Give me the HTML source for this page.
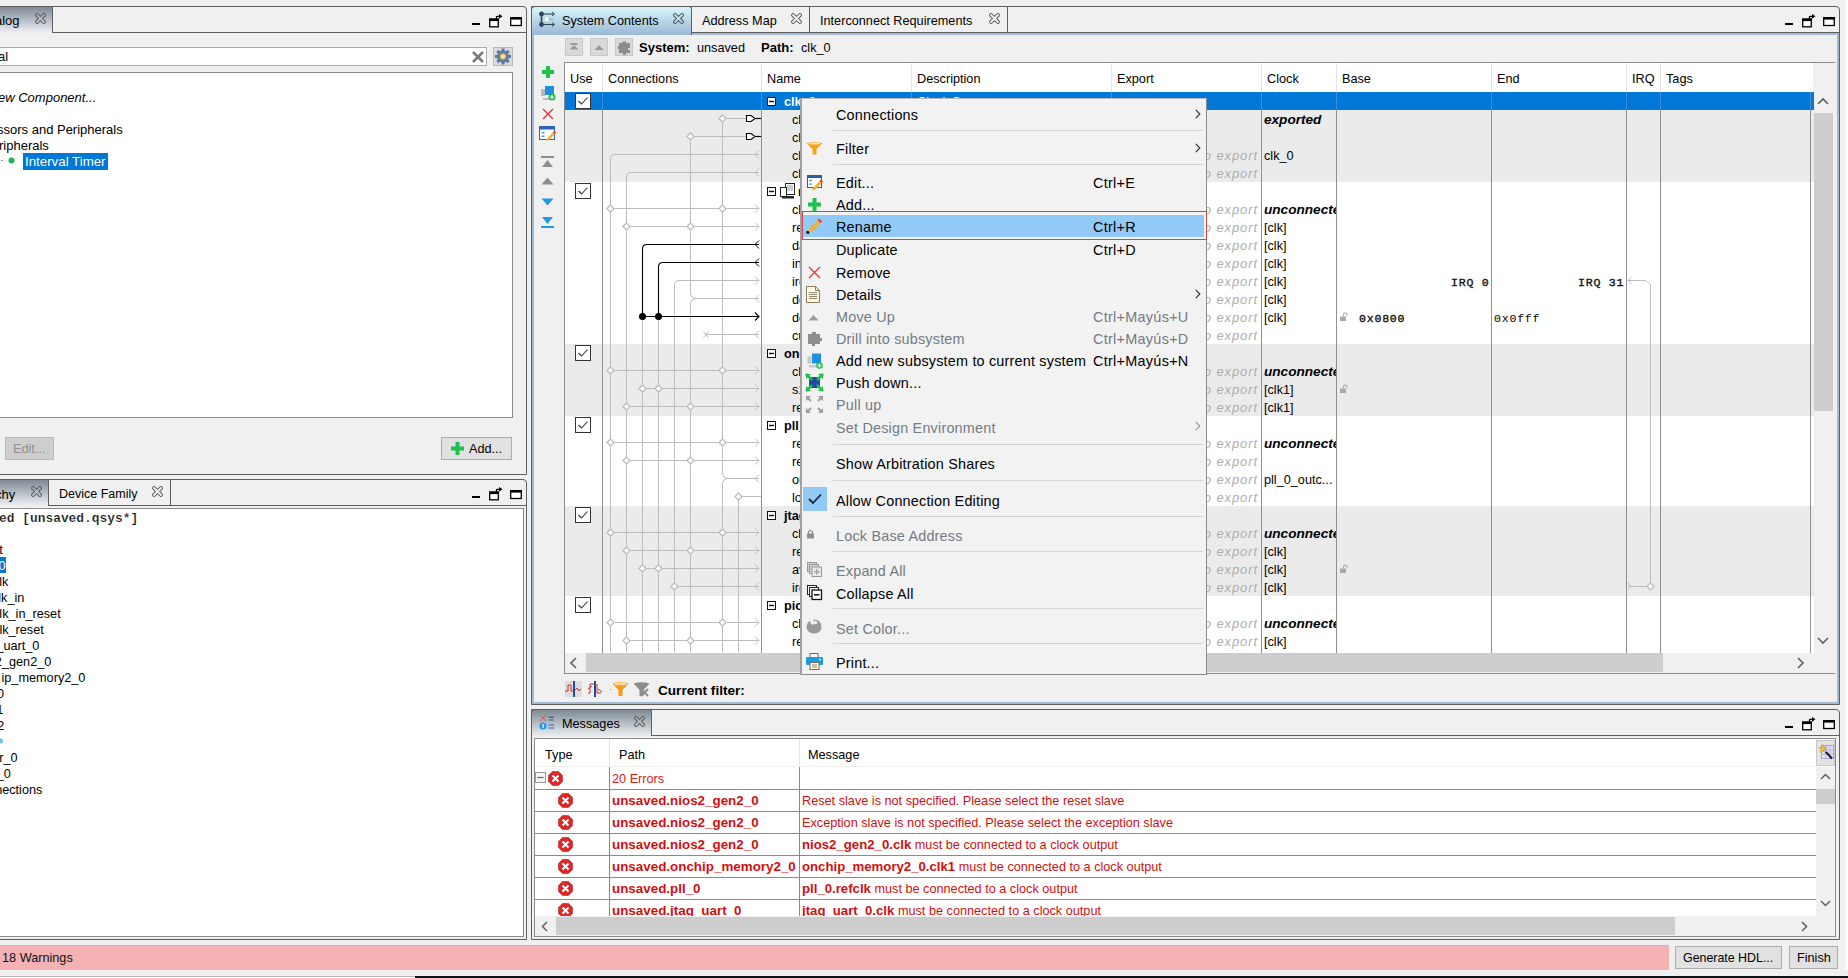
<!DOCTYPE html><html><head><meta charset="utf-8"><style>
html,body{margin:0;padding:0;}
body{width:1848px;height:978px;position:relative;overflow:hidden;background:#f0f0f0;font-family:"Liberation Sans",sans-serif;font-size:12.7px;color:#000;}
.t{position:absolute;white-space:nowrap;line-height:20px;}
div{box-sizing:border-box;}
svg{position:absolute;overflow:visible;}
</style></head><body>
<div style="position:absolute;left:1845px;top:0px;width:3px;height:978px;background:#fbfbfb"></div>
<div style="position:absolute;left:-5px;top:6px;width:532px;height:469px;border:1px solid #5f5f5f;border-top-right-radius:4px;"></div>
<div style="position:absolute;left:0px;top:32px;width:526px;height:1px;background:#5f5f5f"></div>
<div style="position:absolute;left:0px;top:7px;width:53px;height:26px;background:linear-gradient(#7f8a95,#d9dde2 80%,#eef0f2);border-right:1px solid #5f5f5f"></div>
<div class="t" style="left:-5px;top:11px;font-size:13px;">alog</div>
<svg style="left:34px;top:12px" width="13" height="13" viewBox="0 0 13 13"><g transform="translate(6.5 6.5) rotate(45)"><path d="M-1.5 -4.9 A1.5 1.5 0 0 1 1.5 -4.9 V-1.5 H4.9 A1.5 1.5 0 0 1 4.9 1.5 H1.5 V4.9 A1.5 1.5 0 0 1 -1.5 4.9 V1.5 H-4.9 A1.5 1.5 0 0 1 -4.9 -1.5 H-1.5 Z" fill="none" stroke="#555" stroke-width="0.95"/></g></svg>
<div style="position:absolute;left:472px;top:23px;width:8px;height:2px;background:#000"></div>
<svg style="left:488px;top:14px" width="16" height="14" viewBox="0 0 16 14"><rect x="1.7" y="5.2" width="8.6" height="7.6" fill="#fff" stroke="#000" stroke-width="1.3"/><rect x="1" y="4.5" width="10" height="2.6" fill="#000"/><path d="M8.5 5 V3 Q8.5 2.3 9.3 2.3 H12" fill="none" stroke="#000" stroke-width="1.3"/><path d="M11 0 L14.5 2.3 L11 4.8 Z" fill="#000"/></svg>
<svg style="left:510px;top:17px" width="13" height="10" viewBox="0 0 13 10"><rect x="0.7" y="0.7" width="10.6" height="7.8" fill="#fff" stroke="#000" stroke-width="1.3"/><rect x="0" y="0" width="12" height="2.6" fill="#000"/></svg>
<div style="position:absolute;left:-2px;top:47px;width:489px;height:19px;background:#fff;border:1px solid #a9a9a9"></div>
<div class="t" style="left:-2px;top:47px;font-size:13px;">al</div>
<svg style="left:471px;top:50px" width="14" height="14" viewBox="0 0 14 14"><path d="M2 2 L12 12 M12 2 L2 12" stroke="#7a7a7a" stroke-width="2.6" stroke-linecap="butt"/></svg>
<div style="position:absolute;left:493px;top:47px;width:20px;height:19px;background:#dcdcdc;border:1px solid #b9b9b9"></div>
<svg style="left:494px;top:48px" width="18" height="17" viewBox="0 0 18 17"><g transform="translate(9 8.5)"><circle r="6" fill="#5b7ba8"/><g fill="#5b7ba8"><rect x="-1.6" y="-8" width="3.2" height="16"/><rect x="-8" y="-1.6" width="16" height="3.2"/><rect x="-1.6" y="-8" width="3.2" height="16" transform="rotate(45)"/><rect x="-1.6" y="-8" width="3.2" height="16" transform="rotate(-45)"/></g><circle r="3.2" fill="#e7b04a"/><circle r="2" fill="#f5e3b8"/></g></svg>
<div style="position:absolute;left:-2px;top:72px;width:515px;height:346px;background:#fff;border:1px solid #8a8a8a"></div>
<div class="t" style="left:-2px;top:88px;font-style:italic;font-size:13px;">ew Component...</div>
<div class="t" style="left:-3px;top:120px;font-size:13px;">ssors and Peripherals</div>
<div class="t" style="left:-1px;top:136px;font-size:13px;">ripherals</div>
<div style="position:absolute;left:1px;top:160px;width:2px;height:1px;background:#999"></div>
<svg style="left:8px;top:157px" width="7" height="7"><circle cx="3.5" cy="3.5" r="3" fill="#1fb25a"/></svg>
<div style="position:absolute;left:23px;top:153px;width:85px;height:17px;background:#0078d7"></div>
<div class="t" style="left:25px;top:152px;font-size:13.3px;color:#fff;">Interval Timer</div>
<div style="position:absolute;left:5px;top:437px;width:49px;height:23px;background:#cecece;border:1px solid #bababa"></div>
<div class="t" style="left:13px;top:439px;color:#8f8f8f;font-size:12.7px;">Edit...</div>
<div style="position:absolute;left:441px;top:437px;width:71px;height:23px;background:#e1e1e1;border:1px solid #adadad"></div>
<svg style="left:451px;top:442px" width="13" height="13" viewBox="0 0 13 13"><path d="M4.5 0 H8.5 V4.5 H13 V8.5 H8.5 V13 H4.5 V8.5 H0 V4.5 H4.5 Z" fill="#1ec24a"/></svg>
<div class="t" style="left:469px;top:439px;font-size:12.7px;">Add...</div>
<div style="position:absolute;left:-5px;top:479px;width:532px;height:461px;border:1px solid #5f5f5f;border-top-right-radius:4px;"></div>
<div style="position:absolute;left:0px;top:505px;width:526px;height:1px;background:#5f5f5f"></div>
<div style="position:absolute;left:0px;top:480px;width:49px;height:26px;background:linear-gradient(#7f8a95,#d9dde2 80%,#eef0f2);border-right:1px solid #5f5f5f"></div>
<div class="t" style="left:-5px;top:485px;font-size:13px;">chy</div>
<svg style="left:30px;top:485px" width="13" height="13" viewBox="0 0 13 13"><g transform="translate(6.5 6.5) rotate(45)"><path d="M-1.5 -4.9 A1.5 1.5 0 0 1 1.5 -4.9 V-1.5 H4.9 A1.5 1.5 0 0 1 4.9 1.5 H1.5 V4.9 A1.5 1.5 0 0 1 -1.5 4.9 V1.5 H-4.9 A1.5 1.5 0 0 1 -4.9 -1.5 H-1.5 Z" fill="none" stroke="#555" stroke-width="0.95"/></g></svg>
<div style="position:absolute;left:49px;top:480px;width:122px;height:25px;background:#f0f0f0;border-right:1px solid #5f5f5f"></div>
<div class="t" style="left:59px;top:484px;font-size:12.5px;">Device Family</div>
<svg style="left:151px;top:485px" width="13" height="13" viewBox="0 0 13 13"><g transform="translate(6.5 6.5) rotate(45)"><path d="M-1.5 -4.9 A1.5 1.5 0 0 1 1.5 -4.9 V-1.5 H4.9 A1.5 1.5 0 0 1 4.9 1.5 H1.5 V4.9 A1.5 1.5 0 0 1 -1.5 4.9 V1.5 H-4.9 A1.5 1.5 0 0 1 -4.9 -1.5 H-1.5 Z" fill="none" stroke="#555" stroke-width="0.95"/></g></svg>
<div style="position:absolute;left:472px;top:496px;width:8px;height:2px;background:#000"></div>
<svg style="left:488px;top:487px" width="16" height="14" viewBox="0 0 16 14"><rect x="1.7" y="5.2" width="8.6" height="7.6" fill="#fff" stroke="#000" stroke-width="1.3"/><rect x="1" y="4.5" width="10" height="2.6" fill="#000"/><path d="M8.5 5 V3 Q8.5 2.3 9.3 2.3 H12" fill="none" stroke="#000" stroke-width="1.3"/><path d="M11 0 L14.5 2.3 L11 4.8 Z" fill="#000"/></svg>
<svg style="left:510px;top:490px" width="13" height="10" viewBox="0 0 13 10"><rect x="0.7" y="0.7" width="10.6" height="7.8" fill="#fff" stroke="#000" stroke-width="1.3"/><rect x="0" y="0" width="12" height="2.6" fill="#000"/></svg>
<div style="position:absolute;left:-2px;top:508px;width:526px;height:429px;background:#fff;border:1px solid #8a8a8a"></div>
<div class="t" style="left:-1px;top:509px;font-family:'Liberation Mono', monospace;font-weight:bold;font-size:12.9px;-webkit-text-stroke:0.2px #fff;color:#111">ed [unsaved.qsys*]</div>
<div style="position:absolute;left:0px;top:557px;width:6px;height:16px;background:#0078d7"></div>
<div class="t" style="right:1845.3px;top:540px;font-size:12.7px;color:#000;">t</div>
<div class="t" style="right:1842.5px;top:556px;font-size:12.7px;color:#fff;">0</div>
<div class="t" style="right:1839.7px;top:572px;font-size:12.7px;color:#000;">lk</div>
<div class="t" style="right:1823.7px;top:588px;font-size:12.7px;color:#000;">lk_in</div>
<div class="t" style="right:1787.3px;top:604px;font-size:12.7px;color:#000;">lk_in_reset</div>
<div class="t" style="right:1804.2px;top:620px;font-size:12.7px;color:#000;">lk_reset</div>
<div class="t" style="right:1808.6px;top:636px;font-size:12.7px;color:#000;">_uart_0</div>
<div class="t" style="right:1796.7px;top:652px;font-size:12.7px;color:#000;">2_gen2_0</div>
<div class="t" style="right:1762.6px;top:668px;font-size:12.7px;color:#000;">ip_memory2_0</div>
<div class="t" style="right:1844px;top:684px;font-size:12.7px;color:#000;">0</div>
<div class="t" style="right:1844.6px;top:700px;font-size:12.7px;color:#000;">1</div>
<div class="t" style="right:1843.6px;top:716px;font-size:12.7px;color:#000;">2</div>
<div class="t" style="right:1830.5px;top:748px;font-size:12.7px;color:#000;">r_0</div>
<div class="t" style="right:1837.2px;top:764px;font-size:12.7px;color:#000;">_0</div>
<div class="t" style="right:1805.6px;top:780px;font-size:12.7px;color:#000;">nections</div>
<svg style="left:0;top:737px" width="4" height="8"><circle cx="0.5" cy="4" r="2.5" fill="#6ac6e8"/></svg>
<div style="position:absolute;left:531px;top:6px;width:1309px;height:699px;border:1px solid #5f5f5f;border-top-right-radius:4px;"></div>
<div style="position:absolute;left:532px;top:33px;width:1307px;height:671px;border:2px solid #a3bad3;background:#f0f0f0"></div>
<div style="position:absolute;left:532px;top:32px;width:1307px;height:1px;background:#5f5f5f"></div>
<div style="position:absolute;left:531px;top:6px;width:161px;height:29px;background:linear-gradient(#d8f6fa,#b6d3e6 55%,#9ab8d6);border:1px solid #5f5f5f;border-bottom:none;border-top-left-radius:4px;border-top-right-radius:3px"></div>
<svg style="left:537px;top:10px" width="20" height="18" viewBox="0 0 20 18"><g fill="#2b4660" stroke="#2b4660"><circle cx="4.5" cy="4" r="2.4" stroke="none"/><circle cx="4.5" cy="14.5" r="2.4" stroke="none"/><line x1="4.5" y1="4" x2="4.5" y2="14.5" stroke-width="1.6"/><line x1="4.5" y1="4" x2="17" y2="4" stroke-width="1.1"/><line x1="4.5" y1="14.5" x2="17" y2="14.5" stroke-width="1.1"/><path d="M15 2 L17.5 4 L15 6" fill="none" stroke-width="1"/><path d="M15 12.5 L17.5 14.5 L15 16.5" fill="none" stroke-width="1"/></g><rect x="8" y="7.5" width="3.5" height="3.5" fill="#fff"/><line x1="11.5" y1="9.2" x2="17" y2="9.2" stroke="#9aa8b6" stroke-width="1"/></svg>
<div class="t" style="left:562px;top:11px;font-size:12.7px;">System Contents</div>
<svg style="left:672px;top:12px" width="13" height="13" viewBox="0 0 13 13"><g transform="translate(6.5 6.5) rotate(45)"><path d="M-1.5 -4.9 A1.5 1.5 0 0 1 1.5 -4.9 V-1.5 H4.9 A1.5 1.5 0 0 1 4.9 1.5 H1.5 V4.9 A1.5 1.5 0 0 1 -1.5 4.9 V1.5 H-4.9 A1.5 1.5 0 0 1 -4.9 -1.5 H-1.5 Z" fill="none" stroke="#3e4a56" stroke-width="0.95"/></g></svg>
<div style="position:absolute;left:692px;top:7px;width:118px;height:26px;border-right:1px solid #5f5f5f"></div>
<div class="t" style="left:702px;top:11px;font-size:12.7px;">Address Map</div>
<svg style="left:790px;top:12px" width="13" height="13" viewBox="0 0 13 13"><g transform="translate(6.5 6.5) rotate(45)"><path d="M-1.5 -4.9 A1.5 1.5 0 0 1 1.5 -4.9 V-1.5 H4.9 A1.5 1.5 0 0 1 4.9 1.5 H1.5 V4.9 A1.5 1.5 0 0 1 -1.5 4.9 V1.5 H-4.9 A1.5 1.5 0 0 1 -4.9 -1.5 H-1.5 Z" fill="none" stroke="#555" stroke-width="0.95"/></g></svg>
<div style="position:absolute;left:810px;top:7px;width:198px;height:26px;border-right:1px solid #5f5f5f"></div>
<div class="t" style="left:820px;top:11px;font-size:12.7px;">Interconnect Requirements</div>
<svg style="left:988px;top:12px" width="13" height="13" viewBox="0 0 13 13"><g transform="translate(6.5 6.5) rotate(45)"><path d="M-1.5 -4.9 A1.5 1.5 0 0 1 1.5 -4.9 V-1.5 H4.9 A1.5 1.5 0 0 1 4.9 1.5 H1.5 V4.9 A1.5 1.5 0 0 1 -1.5 4.9 V1.5 H-4.9 A1.5 1.5 0 0 1 -4.9 -1.5 H-1.5 Z" fill="none" stroke="#555" stroke-width="0.95"/></g></svg>
<div style="position:absolute;left:1785px;top:23px;width:8px;height:2px;background:#000"></div>
<svg style="left:1801px;top:14px" width="16" height="14" viewBox="0 0 16 14"><rect x="1.7" y="5.2" width="8.6" height="7.6" fill="#fff" stroke="#000" stroke-width="1.3"/><rect x="1" y="4.5" width="10" height="2.6" fill="#000"/><path d="M8.5 5 V3 Q8.5 2.3 9.3 2.3 H12" fill="none" stroke="#000" stroke-width="1.3"/><path d="M11 0 L14.5 2.3 L11 4.8 Z" fill="#000"/></svg>
<svg style="left:1823px;top:17px" width="13" height="10" viewBox="0 0 13 10"><rect x="0.7" y="0.7" width="10.6" height="7.8" fill="#fff" stroke="#000" stroke-width="1.3"/><rect x="0" y="0" width="12" height="2.6" fill="#000"/></svg>
<div style="position:absolute;left:565px;top:38px;width:18px;height:18px;background:#d9d9d9;border:1px solid #c8c8c8"></div>
<div style="position:absolute;left:590px;top:38px;width:18px;height:18px;background:#d9d9d9;border:1px solid #c8c8c8"></div>
<div style="position:absolute;left:615px;top:38px;width:18px;height:18px;background:#d9d9d9;border:1px solid #c8c8c8"></div>
<svg style="left:569px;top:43px" width="10" height="9" viewBox="0 0 10 9"><rect x="1.5" y="0" width="7" height="2" fill="#9a9a9a"/><path d="M0.5 6.5 L5 2 L9.5 6.5 Z" fill="#9a9a9a"/></svg>
<svg style="left:594px;top:43px" width="10" height="8" viewBox="0 0 10 8"><path d="M0.5 7 L5 2 L9.5 7 Z" fill="#999"/></svg>
<svg style="left:617px;top:40px" width="15" height="15" viewBox="0 0 15 15"><path d="M2 3 H5 L6 1.5 H9 V3 H13 V8 H11 V10 H13 V13 H9 V15 H6 V13 H2 V9 H1 V6 H2 Z" fill="#8c8c8c"/></svg>
<div class="t" style="left:639px;top:38px;font-weight:bold;font-size:13px;">System:</div>
<div class="t" style="left:697px;top:38px;font-size:12.7px;">unsaved</div>
<div class="t" style="left:761px;top:38px;font-weight:bold;font-size:13px;">Path:</div>
<div class="t" style="left:801px;top:38px;font-size:12.7px;">clk_0</div>
<svg style="left:542px;top:66px" width="12" height="12" viewBox="0 0 12 12"><path d="M4 0 H8 V4 H12 V8 H8 V12 H4 V8 H0 V4 H4 Z" fill="#1ec24a"/></svg>
<svg style="left:540px;top:85px" width="16" height="16" viewBox="0 0 16 16"><rect x="1" y="4" width="4" height="7" fill="#bbb"/><rect x="3" y="13" width="8" height="2" fill="#bbb"/><rect x="5" y="1" width="9" height="9" fill="#1e90e0"/><circle cx="12" cy="12" r="3.5" fill="#1ec24a"/><path d="M12 10 V14 M10 12 H14" stroke="#fff" stroke-width="1.2"/></svg>
<svg style="left:542px;top:108px" width="12" height="12" viewBox="0 0 12 12"><path d="M1 1 L11 11 M11 1 L1 11" stroke="#e03030" stroke-width="1.3"/></svg>
<svg style="left:539px;top:126px" width="17" height="16" viewBox="0 0 17 16"><rect x="0.5" y="0.5" width="15" height="13" fill="#fff" stroke="#2a63b8"/><rect x="0.5" y="0.5" width="15" height="3" fill="#2a63b8"/><rect x="2.5" y="6" width="3" height="1.5" fill="#5aa0e0"/><rect x="2.5" y="9.5" width="3" height="1.5" fill="#5aa0e0"/><path d="M7 14 L14 6 L16 8 L9 15 Z" fill="#f0b030"/><path d="M14 6 L15.5 4.5 L17 6.5 L16 8Z" fill="#e03030"/></svg>
<svg style="left:541px;top:156px" width="13" height="11" viewBox="0 0 13 11"><rect x="0" y="0" width="13" height="2" fill="#8d8d8d"/><path d="M1 11 L6.5 4 L12 11 Z" fill="#8d8d8d"/></svg>
<svg style="left:541px;top:177px" width="13" height="8" viewBox="0 0 13 8"><path d="M0.5 7.5 L6.5 0.5 L12.5 7.5 Z" fill="#8d8d8d"/></svg>
<svg style="left:541px;top:198px" width="13" height="8" viewBox="0 0 13 8"><path d="M0.5 0.5 L6.5 7.5 L12.5 0.5 Z" fill="#1e9be8"/></svg>
<svg style="left:541px;top:217px" width="13" height="11" viewBox="0 0 13 11"><rect x="0" y="9" width="13" height="2" fill="#1e9be8"/><path d="M1 0 L6.5 7 L12 0 Z" fill="#1e9be8"/></svg>
<div style="position:absolute;left:564px;top:62px;width:1271px;height:612px;border:1px solid #8c8c8c;background:#fff"></div>
<div style="position:absolute;left:602px;top:63px;width:1px;height:29px;background:#e3e3e3"></div>
<div style="position:absolute;left:761px;top:63px;width:1px;height:29px;background:#e3e3e3"></div>
<div style="position:absolute;left:911px;top:63px;width:1px;height:29px;background:#e3e3e3"></div>
<div style="position:absolute;left:1111px;top:63px;width:1px;height:29px;background:#e3e3e3"></div>
<div style="position:absolute;left:1261px;top:63px;width:1px;height:29px;background:#e3e3e3"></div>
<div style="position:absolute;left:1336px;top:63px;width:1px;height:29px;background:#e3e3e3"></div>
<div style="position:absolute;left:1491px;top:63px;width:1px;height:29px;background:#e3e3e3"></div>
<div style="position:absolute;left:1626px;top:63px;width:1px;height:29px;background:#e3e3e3"></div>
<div style="position:absolute;left:1660px;top:63px;width:1px;height:29px;background:#e3e3e3"></div>
<div class="t" style="left:570px;top:69px;font-size:12.7px;">Use</div>
<div class="t" style="left:608px;top:69px;font-size:12.7px;">Connections</div>
<div class="t" style="left:767px;top:69px;font-size:12.7px;">Name</div>
<div class="t" style="left:917px;top:69px;font-size:12.7px;">Description</div>
<div class="t" style="left:1117px;top:69px;font-size:12.7px;">Export</div>
<div class="t" style="left:1267px;top:69px;font-size:12.7px;">Clock</div>
<div class="t" style="left:1342px;top:69px;font-size:12.7px;">Base</div>
<div class="t" style="left:1497px;top:69px;font-size:12.7px;">End</div>
<div class="t" style="left:1632px;top:69px;font-size:12.7px;">IRQ</div>
<div class="t" style="left:1666px;top:69px;font-size:12.7px;">Tags</div>
<div style="position:absolute;left:1813px;top:63px;width:22px;height:29px;background:#f0f0f0"></div>
<div style="position:absolute;left:565px;top:92px;width:1249px;height:90px;background:#ebebeb"></div>
<div style="position:absolute;left:565px;top:344px;width:1249px;height:72px;background:#ebebeb"></div>
<div style="position:absolute;left:565px;top:506px;width:1249px;height:90px;background:#ebebeb"></div>
<div style="position:absolute;left:565px;top:92px;width:1249px;height:18px;background:#0078d7"></div>
<div style="position:absolute;left:602px;top:92px;width:1px;height:561px;background:#8f8f8f"></div>
<div style="position:absolute;left:602px;top:92px;width:1px;height:18px;background:#3f8fd8"></div>
<div style="position:absolute;left:761px;top:92px;width:1px;height:561px;background:#8f8f8f"></div>
<div style="position:absolute;left:761px;top:92px;width:1px;height:18px;background:#3f8fd8"></div>
<div style="position:absolute;left:911px;top:92px;width:1px;height:561px;background:#8f8f8f"></div>
<div style="position:absolute;left:911px;top:92px;width:1px;height:18px;background:#3f8fd8"></div>
<div style="position:absolute;left:1111px;top:92px;width:1px;height:561px;background:#8f8f8f"></div>
<div style="position:absolute;left:1111px;top:92px;width:1px;height:18px;background:#3f8fd8"></div>
<div style="position:absolute;left:1261px;top:92px;width:1px;height:561px;background:#8f8f8f"></div>
<div style="position:absolute;left:1261px;top:92px;width:1px;height:18px;background:#3f8fd8"></div>
<div style="position:absolute;left:1336px;top:92px;width:1px;height:561px;background:#8f8f8f"></div>
<div style="position:absolute;left:1336px;top:92px;width:1px;height:18px;background:#3f8fd8"></div>
<div style="position:absolute;left:1491px;top:92px;width:1px;height:561px;background:#8f8f8f"></div>
<div style="position:absolute;left:1491px;top:92px;width:1px;height:18px;background:#3f8fd8"></div>
<div style="position:absolute;left:1626px;top:92px;width:1px;height:561px;background:#8f8f8f"></div>
<div style="position:absolute;left:1626px;top:92px;width:1px;height:18px;background:#3f8fd8"></div>
<div style="position:absolute;left:1660px;top:92px;width:1px;height:561px;background:#8f8f8f"></div>
<div style="position:absolute;left:1660px;top:92px;width:1px;height:18px;background:#3f8fd8"></div>
<div style="position:absolute;left:1810px;top:92px;width:1px;height:561px;background:#8f8f8f"></div>
<div style="position:absolute;left:1810px;top:92px;width:1px;height:18px;background:#3f8fd8"></div>
<svg style="left:575px;top:93px" width="16" height="16" viewBox="0 0 16 16"><rect x="0.5" y="0.5" width="15" height="15" fill="#fff" stroke="#333"/><path d="M3.5 8 L6.5 11 L12.5 4.5" fill="none" stroke="#333" stroke-width="1.1"/></svg>
<svg style="left:575px;top:183px" width="16" height="16" viewBox="0 0 16 16"><rect x="0.5" y="0.5" width="15" height="15" fill="#fff" stroke="#333"/><path d="M3.5 8 L6.5 11 L12.5 4.5" fill="none" stroke="#333" stroke-width="1.1"/></svg>
<svg style="left:575px;top:345px" width="16" height="16" viewBox="0 0 16 16"><rect x="0.5" y="0.5" width="15" height="15" fill="#fff" stroke="#333"/><path d="M3.5 8 L6.5 11 L12.5 4.5" fill="none" stroke="#333" stroke-width="1.1"/></svg>
<svg style="left:575px;top:417px" width="16" height="16" viewBox="0 0 16 16"><rect x="0.5" y="0.5" width="15" height="15" fill="#fff" stroke="#333"/><path d="M3.5 8 L6.5 11 L12.5 4.5" fill="none" stroke="#333" stroke-width="1.1"/></svg>
<svg style="left:575px;top:507px" width="16" height="16" viewBox="0 0 16 16"><rect x="0.5" y="0.5" width="15" height="15" fill="#fff" stroke="#333"/><path d="M3.5 8 L6.5 11 L12.5 4.5" fill="none" stroke="#333" stroke-width="1.1"/></svg>
<svg style="left:575px;top:597px" width="16" height="16" viewBox="0 0 16 16"><rect x="0.5" y="0.5" width="15" height="15" fill="#fff" stroke="#333"/><path d="M3.5 8 L6.5 11 L12.5 4.5" fill="none" stroke="#333" stroke-width="1.1"/></svg>
<svg style="left:767px;top:97px" width="9" height="9" viewBox="0 0 9 9"><rect x="0.5" y="0.5" width="8" height="8" fill="#fff" stroke="#111"/><rect x="2" y="3.8" width="5" height="1.4" fill="#111"/></svg>
<div class="t" style="left:784px;top:92px;font-weight:bold;color:#fff;font-size:12.7px;">clk_0</div>
<div class="t" style="left:917px;top:92px;color:#fff;font-size:12.7px;">Clock Source</div>
<div class="t" style="left:792px;top:110px;font-size:12.7px;">clk_in</div>
<div class="t" style="left:792px;top:128px;font-size:12.7px;">clk_in_reset</div>
<div class="t" style="left:792px;top:146px;font-size:12.7px;">clk</div>
<div class="t" style="left:792px;top:164px;font-size:12.7px;">clk_reset</div>
<svg style="left:767px;top:187px" width="9" height="9" viewBox="0 0 9 9"><rect x="0.5" y="0.5" width="8" height="8" fill="#fff" stroke="#111"/><rect x="2" y="3.8" width="5" height="1.4" fill="#111"/></svg>
<svg style="left:780px;top:183px" width="16" height="16" viewBox="0 0 16 16"><rect x="5.5" y="0.5" width="9" height="11" fill="#fff" stroke="#222"/><rect x="7" y="2" width="6" height="6" fill="#ccc"/><rect x="0.5" y="4.5" width="6" height="9" fill="#fff" stroke="#222"/><rect x="2" y="13" width="12" height="2.5" fill="#222"/></svg>
<div class="t" style="left:798px;top:182px;font-weight:bold;color:#000;font-size:12.7px;">nios2_gen2_0</div>
<div class="t" style="left:917px;top:182px;color:#000;font-size:12.7px;">Nios II Processor</div>
<div class="t" style="left:792px;top:200px;font-size:12.7px;">clk</div>
<div class="t" style="left:792px;top:218px;font-size:12.7px;">reset</div>
<div class="t" style="left:792px;top:236px;font-size:12.7px;">data_master</div>
<div class="t" style="left:792px;top:254px;font-size:12.7px;">instruction_master</div>
<div class="t" style="left:792px;top:272px;font-size:12.7px;">irq</div>
<div class="t" style="left:792px;top:290px;font-size:12.7px;">debug_reset_request</div>
<div class="t" style="left:792px;top:308px;font-size:12.7px;">debug_mem_slave</div>
<div class="t" style="left:792px;top:326px;font-size:12.7px;">custom_instruction_master</div>
<svg style="left:767px;top:349px" width="9" height="9" viewBox="0 0 9 9"><rect x="0.5" y="0.5" width="8" height="8" fill="#fff" stroke="#111"/><rect x="2" y="3.8" width="5" height="1.4" fill="#111"/></svg>
<div class="t" style="left:784px;top:344px;font-weight:bold;color:#000;font-size:12.7px;">onchip_memory2_0</div>
<div class="t" style="left:917px;top:344px;color:#000;font-size:12.7px;">On-Chip Memory (RAM or ROM) Intel FPGA IP</div>
<div class="t" style="left:792px;top:362px;font-size:12.7px;">clk1</div>
<div class="t" style="left:792px;top:380px;font-size:12.7px;">s1</div>
<div class="t" style="left:792px;top:398px;font-size:12.7px;">reset1</div>
<svg style="left:767px;top:421px" width="9" height="9" viewBox="0 0 9 9"><rect x="0.5" y="0.5" width="8" height="8" fill="#fff" stroke="#111"/><rect x="2" y="3.8" width="5" height="1.4" fill="#111"/></svg>
<div class="t" style="left:784px;top:416px;font-weight:bold;color:#000;font-size:12.7px;">pll_0</div>
<div class="t" style="left:917px;top:416px;color:#000;font-size:12.7px;">PLL Intel FPGA IP</div>
<div class="t" style="left:792px;top:434px;font-size:12.7px;">refclk</div>
<div class="t" style="left:792px;top:452px;font-size:12.7px;">reset</div>
<div class="t" style="left:792px;top:470px;font-size:12.7px;">outclk0</div>
<div class="t" style="left:792px;top:488px;font-size:12.7px;">locked</div>
<svg style="left:767px;top:511px" width="9" height="9" viewBox="0 0 9 9"><rect x="0.5" y="0.5" width="8" height="8" fill="#fff" stroke="#111"/><rect x="2" y="3.8" width="5" height="1.4" fill="#111"/></svg>
<div class="t" style="left:784px;top:506px;font-weight:bold;color:#000;font-size:12.7px;">jtag_uart_0</div>
<div class="t" style="left:917px;top:506px;color:#000;font-size:12.7px;">JTAG UART Intel FPGA IP</div>
<div class="t" style="left:792px;top:524px;font-size:12.7px;">clk</div>
<div class="t" style="left:792px;top:542px;font-size:12.7px;">reset</div>
<div class="t" style="left:792px;top:560px;font-size:12.7px;">avalon_jtag_slave</div>
<div class="t" style="left:792px;top:578px;font-size:12.7px;">irq</div>
<svg style="left:767px;top:601px" width="9" height="9" viewBox="0 0 9 9"><rect x="0.5" y="0.5" width="8" height="8" fill="#fff" stroke="#111"/><rect x="2" y="3.8" width="5" height="1.4" fill="#111"/></svg>
<div class="t" style="left:784px;top:596px;font-weight:bold;color:#000;font-size:12.7px;">pio_0</div>
<div class="t" style="left:917px;top:596px;color:#000;font-size:12.7px;">PIO (Parallel I/O) Intel FPGA IP</div>
<div class="t" style="left:792px;top:614px;font-size:12.7px;">clk</div>
<div class="t" style="left:792px;top:632px;font-size:12.7px;">reset</div>
<div class="t" style="left:792px;top:650px;font-size:12.7px;">external_connection</div>
<div class="t" style="left:1058px;top:146px;width:200px;text-align:right;font-style:italic;color:#adadad;font-size:13px;letter-spacing:0.9px;">Double-click to export</div>
<div class="t" style="left:1058px;top:164px;width:200px;text-align:right;font-style:italic;color:#adadad;font-size:13px;letter-spacing:0.9px;">Double-click to export</div>
<div class="t" style="left:1058px;top:200px;width:200px;text-align:right;font-style:italic;color:#adadad;font-size:13px;letter-spacing:0.9px;">Double-click to export</div>
<div class="t" style="left:1058px;top:218px;width:200px;text-align:right;font-style:italic;color:#adadad;font-size:13px;letter-spacing:0.9px;">Double-click to export</div>
<div class="t" style="left:1058px;top:236px;width:200px;text-align:right;font-style:italic;color:#adadad;font-size:13px;letter-spacing:0.9px;">Double-click to export</div>
<div class="t" style="left:1058px;top:254px;width:200px;text-align:right;font-style:italic;color:#adadad;font-size:13px;letter-spacing:0.9px;">Double-click to export</div>
<div class="t" style="left:1058px;top:272px;width:200px;text-align:right;font-style:italic;color:#adadad;font-size:13px;letter-spacing:0.9px;">Double-click to export</div>
<div class="t" style="left:1058px;top:290px;width:200px;text-align:right;font-style:italic;color:#adadad;font-size:13px;letter-spacing:0.9px;">Double-click to export</div>
<div class="t" style="left:1058px;top:308px;width:200px;text-align:right;font-style:italic;color:#adadad;font-size:13px;letter-spacing:0.9px;">Double-click to export</div>
<div class="t" style="left:1058px;top:326px;width:200px;text-align:right;font-style:italic;color:#adadad;font-size:13px;letter-spacing:0.9px;">Double-click to export</div>
<div class="t" style="left:1058px;top:362px;width:200px;text-align:right;font-style:italic;color:#adadad;font-size:13px;letter-spacing:0.9px;">Double-click to export</div>
<div class="t" style="left:1058px;top:380px;width:200px;text-align:right;font-style:italic;color:#adadad;font-size:13px;letter-spacing:0.9px;">Double-click to export</div>
<div class="t" style="left:1058px;top:398px;width:200px;text-align:right;font-style:italic;color:#adadad;font-size:13px;letter-spacing:0.9px;">Double-click to export</div>
<div class="t" style="left:1058px;top:434px;width:200px;text-align:right;font-style:italic;color:#adadad;font-size:13px;letter-spacing:0.9px;">Double-click to export</div>
<div class="t" style="left:1058px;top:452px;width:200px;text-align:right;font-style:italic;color:#adadad;font-size:13px;letter-spacing:0.9px;">Double-click to export</div>
<div class="t" style="left:1058px;top:470px;width:200px;text-align:right;font-style:italic;color:#adadad;font-size:13px;letter-spacing:0.9px;">Double-click to export</div>
<div class="t" style="left:1058px;top:488px;width:200px;text-align:right;font-style:italic;color:#adadad;font-size:13px;letter-spacing:0.9px;">Double-click to export</div>
<div class="t" style="left:1058px;top:524px;width:200px;text-align:right;font-style:italic;color:#adadad;font-size:13px;letter-spacing:0.9px;">Double-click to export</div>
<div class="t" style="left:1058px;top:542px;width:200px;text-align:right;font-style:italic;color:#adadad;font-size:13px;letter-spacing:0.9px;">Double-click to export</div>
<div class="t" style="left:1058px;top:560px;width:200px;text-align:right;font-style:italic;color:#adadad;font-size:13px;letter-spacing:0.9px;">Double-click to export</div>
<div class="t" style="left:1058px;top:578px;width:200px;text-align:right;font-style:italic;color:#adadad;font-size:13px;letter-spacing:0.9px;">Double-click to export</div>
<div class="t" style="left:1058px;top:614px;width:200px;text-align:right;font-style:italic;color:#adadad;font-size:13px;letter-spacing:0.9px;">Double-click to export</div>
<div class="t" style="left:1058px;top:632px;width:200px;text-align:right;font-style:italic;color:#adadad;font-size:13px;letter-spacing:0.9px;">Double-click to export</div>
<div style="position:absolute;left:1262px;top:92px;width:74px;height:561px;overflow:hidden">
<div class="t" style="left:2px;top:18px;font-weight:bold;font-style:italic;font-size:13.6px;">exported</div>
<div class="t" style="left:2px;top:54px;font-size:12.7px;">clk_0</div>
<div class="t" style="left:2px;top:108px;font-weight:bold;font-style:italic;font-size:13.6px;">unconnected</div>
<div class="t" style="left:2px;top:126px;font-size:12.7px;">[clk]</div>
<div class="t" style="left:2px;top:144px;font-size:12.7px;">[clk]</div>
<div class="t" style="left:2px;top:162px;font-size:12.7px;">[clk]</div>
<div class="t" style="left:2px;top:180px;font-size:12.7px;">[clk]</div>
<div class="t" style="left:2px;top:198px;font-size:12.7px;">[clk]</div>
<div class="t" style="left:2px;top:216px;font-size:12.7px;">[clk]</div>
<div class="t" style="left:2px;top:270px;font-weight:bold;font-style:italic;font-size:13.6px;">unconnected</div>
<div class="t" style="left:2px;top:288px;font-size:12.7px;">[clk1]</div>
<div class="t" style="left:2px;top:306px;font-size:12.7px;">[clk1]</div>
<div class="t" style="left:2px;top:342px;font-weight:bold;font-style:italic;font-size:13.6px;">unconnected</div>
<div class="t" style="left:2px;top:378px;font-size:12.7px;">pll_0_outc...</div>
<div class="t" style="left:2px;top:432px;font-weight:bold;font-style:italic;font-size:13.6px;">unconnected</div>
<div class="t" style="left:2px;top:450px;font-size:12.7px;">[clk]</div>
<div class="t" style="left:2px;top:468px;font-size:12.7px;">[clk]</div>
<div class="t" style="left:2px;top:486px;font-size:12.7px;">[clk]</div>
<div class="t" style="left:2px;top:522px;font-weight:bold;font-style:italic;font-size:13.6px;">unconnected</div>
<div class="t" style="left:2px;top:540px;font-size:12.7px;">[clk]</div>
</div>
<svg style="left:1340px;top:313px" width="8" height="8" viewBox="0 0 8 8"><rect x="0" y="3.5" width="6" height="4.5" fill="#aaa"/><path d="M3.5 3.5 V1.8 A1.8 1.8 0 0 1 7.1 1.8 V3" fill="none" stroke="#aaa" stroke-width="1.1"/></svg>
<svg style="left:1340px;top:385px" width="8" height="8" viewBox="0 0 8 8"><rect x="0" y="3.5" width="6" height="4.5" fill="#aaa"/><path d="M3.5 3.5 V1.8 A1.8 1.8 0 0 1 7.1 1.8 V3" fill="none" stroke="#aaa" stroke-width="1.1"/></svg>
<svg style="left:1340px;top:565px" width="8" height="8" viewBox="0 0 8 8"><rect x="0" y="3.5" width="6" height="4.5" fill="#aaa"/><path d="M3.5 3.5 V1.8 A1.8 1.8 0 0 1 7.1 1.8 V3" fill="none" stroke="#aaa" stroke-width="1.1"/></svg>
<div class="t" style="left:1359px;top:308.5px;font-family:'Liberation Mono', monospace;-webkit-text-stroke:0.35px #111;font-size:11.6px;letter-spacing:0.76px;color:#111;">0x0800</div>
<div class="t" style="left:1494px;top:308.5px;font-family:'Liberation Mono', monospace;-webkit-text-stroke:0.1px #111;font-size:11.6px;letter-spacing:0.76px;color:#111;">0x0fff</div>
<div class="t" style="left:1451px;top:272.5px;font-family:'Liberation Mono', monospace;-webkit-text-stroke:0.35px #111;font-size:11.6px;letter-spacing:0.76px;color:#111;">IRQ 0</div>
<div class="t" style="left:1578px;top:272.5px;font-family:'Liberation Mono', monospace;-webkit-text-stroke:0.35px #111;font-size:11.6px;letter-spacing:0.76px;color:#111;">IRQ 31</div>
<div style="position:absolute;left:602px;top:92px;width:159px;height:561px;overflow:hidden"><svg style="left:-602px;top:-93px" width="1848" height="978"><line x1="610.5" y1="160" x2="610.5" y2="653" stroke="#bdbdbd" stroke-width="1"/><line x1="626.5" y1="178" x2="626.5" y2="653" stroke="#bdbdbd" stroke-width="1"/><line x1="642.5" y1="317" x2="642.5" y2="653" stroke="#bdbdbd" stroke-width="1"/><line x1="658.5" y1="317" x2="658.5" y2="653" stroke="#bdbdbd" stroke-width="1"/><line x1="674.5" y1="286" x2="674.5" y2="653" stroke="#bdbdbd" stroke-width="1"/><line x1="690.5" y1="137" x2="690.5" y2="294" stroke="#bdbdbd" stroke-width="1"/><line x1="690.5" y1="305" x2="690.5" y2="653" stroke="#bdbdbd" stroke-width="1"/><line x1="722.5" y1="119" x2="722.5" y2="474" stroke="#bdbdbd" stroke-width="1"/><line x1="722.5" y1="485" x2="722.5" y2="653" stroke="#bdbdbd" stroke-width="1"/><line x1="738.5" y1="497" x2="738.5" y2="653" stroke="#bdbdbd" stroke-width="1"/><line x1="722.5" y1="119.5" x2="746" y2="119.5" stroke="#bdbdbd" stroke-width="1"/><path d="M722.5 116.0 L726.0 119.5 L722.5 123.0 L719.0 119.5 Z" fill="#fff" stroke="#bdbdbd" stroke-width="1.3"/><line x1="690.5" y1="137.5" x2="746" y2="137.5" stroke="#bdbdbd" stroke-width="1"/><path d="M690.5 134.0 L694.0 137.5 L690.5 141.0 L687.0 137.5 Z" fill="#fff" stroke="#bdbdbd" stroke-width="1.3"/><path d="M746.5 116.5 H751 L755 119.5 L751 122.5 H746.5 Z" fill="#fff" stroke="#000" stroke-width="1.1"/><line x1="755" y1="119.5" x2="761" y2="119.5" stroke="#000" stroke-width="1.2"/><path d="M746.5 134.5 H751 L755 137.5 L751 140.5 H746.5 Z" fill="#fff" stroke="#000" stroke-width="1.1"/><line x1="755" y1="137.5" x2="761" y2="137.5" stroke="#000" stroke-width="1.2"/><path d="M610.5 160 Q610.5 155.5 615 155.5 H759" fill="none" stroke="#bdbdbd"/><path d="M759 151.5 L755 155.5 L759 159.5" fill="none" stroke="#bdbdbd" stroke-width="1"/><path d="M626.5 178 Q626.5 173.5 631 173.5 H759" fill="none" stroke="#bdbdbd"/><path d="M759 169.5 L755 173.5 L759 177.5" fill="none" stroke="#bdbdbd" stroke-width="1"/><line x1="610.5" y1="209.5" x2="759" y2="209.5" stroke="#bdbdbd" stroke-width="1"/><path d="M610.5 206.0 L614.0 209.5 L610.5 213.0 L607.0 209.5 Z" fill="#fff" stroke="#bdbdbd" stroke-width="1.3"/><path d="M722.5 206.0 L726.0 209.5 L722.5 213.0 L719.0 209.5 Z" fill="#fff" stroke="#bdbdbd" stroke-width="1.3"/><path d="M755 205.5 L759 209.5 L755 213.5" fill="none" stroke="#bdbdbd" stroke-width="1"/><line x1="626.5" y1="227.5" x2="759" y2="227.5" stroke="#bdbdbd" stroke-width="1"/><path d="M626.5 224.0 L630.0 227.5 L626.5 231.0 L623.0 227.5 Z" fill="#fff" stroke="#bdbdbd" stroke-width="1.3"/><path d="M690.5 224.0 L694.0 227.5 L690.5 231.0 L687.0 227.5 Z" fill="#fff" stroke="#bdbdbd" stroke-width="1.3"/><path d="M755 223.5 L759 227.5 L755 231.5" fill="none" stroke="#bdbdbd" stroke-width="1"/><path d="M642.5 317.5 V250 Q642.5 245.5 647 245.5 H759" fill="none" stroke="#000" stroke-width="1.1"/><path d="M759 241.5 L755 245.5 L759 249.5" fill="none" stroke="#000" stroke-width="1"/><path d="M658.5 317.5 V268 Q658.5 263.5 663 263.5 H759" fill="none" stroke="#000" stroke-width="1.1"/><path d="M759 259.5 L755 263.5 L759 267.5" fill="none" stroke="#000" stroke-width="1"/><path d="M674.5 286 Q674.5 281.5 679 281.5 H759" fill="none" stroke="#bdbdbd"/><path d="M755 277.5 L759 281.5 L755 285.5" fill="none" stroke="#bdbdbd" stroke-width="1"/><path d="M690.5 293.5 Q690.5 299.5 696.5 299.5 Q690.5 299.5 690.5 305.5" fill="none" stroke="#bdbdbd" stroke-width="1"/><line x1="696.5" y1="299.5" x2="759" y2="299.5" stroke="#bdbdbd" stroke-width="1"/><path d="M759 295.5 L755 299.5 L759 303.5" fill="none" stroke="#bdbdbd" stroke-width="1"/><line x1="642.5" y1="317.5" x2="759" y2="317.5" stroke="#000" stroke-width="1.1"/><path d="M755 313.5 L759 317.5 L755 321.5" fill="none" stroke="#000" stroke-width="1.1"/><circle cx="642.5" cy="317.5" r="3.5" fill="#000"/><circle cx="658.5" cy="317.5" r="3.5" fill="#000"/><line x1="706" y1="335.5" x2="759" y2="335.5" stroke="#bdbdbd" stroke-width="1"/><path d="M759 331.5 L755 335.5 L759 339.5" fill="none" stroke="#bdbdbd" stroke-width="1"/><path d="M703.5 332.5 L708.5 338.5 M708.5 332.5 L703.5 338.5" stroke="#bdbdbd"/><line x1="610.5" y1="371.5" x2="759" y2="371.5" stroke="#bdbdbd" stroke-width="1"/><path d="M610.5 368.0 L614.0 371.5 L610.5 375.0 L607.0 371.5 Z" fill="#fff" stroke="#bdbdbd" stroke-width="1.3"/><path d="M722.5 368.0 L726.0 371.5 L722.5 375.0 L719.0 371.5 Z" fill="#fff" stroke="#bdbdbd" stroke-width="1.3"/><path d="M755 367.5 L759 371.5 L755 375.5" fill="none" stroke="#bdbdbd" stroke-width="1"/><line x1="642.5" y1="389.5" x2="759" y2="389.5" stroke="#bdbdbd" stroke-width="1"/><path d="M642.5 386.0 L646.0 389.5 L642.5 393.0 L639.0 389.5 Z" fill="#fff" stroke="#bdbdbd" stroke-width="1.3"/><path d="M658.5 386.0 L662.0 389.5 L658.5 393.0 L655.0 389.5 Z" fill="#fff" stroke="#bdbdbd" stroke-width="1.3"/><path d="M755 385.5 L759 389.5 L755 393.5" fill="none" stroke="#bdbdbd" stroke-width="1"/><line x1="626.5" y1="407.5" x2="759" y2="407.5" stroke="#bdbdbd" stroke-width="1"/><path d="M626.5 404.0 L630.0 407.5 L626.5 411.0 L623.0 407.5 Z" fill="#fff" stroke="#bdbdbd" stroke-width="1.3"/><path d="M690.5 404.0 L694.0 407.5 L690.5 411.0 L687.0 407.5 Z" fill="#fff" stroke="#bdbdbd" stroke-width="1.3"/><path d="M755 403.5 L759 407.5 L755 411.5" fill="none" stroke="#bdbdbd" stroke-width="1"/><line x1="610.5" y1="443.5" x2="759" y2="443.5" stroke="#bdbdbd" stroke-width="1"/><path d="M610.5 440.0 L614.0 443.5 L610.5 447.0 L607.0 443.5 Z" fill="#fff" stroke="#bdbdbd" stroke-width="1.3"/><path d="M722.5 440.0 L726.0 443.5 L722.5 447.0 L719.0 443.5 Z" fill="#fff" stroke="#bdbdbd" stroke-width="1.3"/><path d="M755 439.5 L759 443.5 L755 447.5" fill="none" stroke="#bdbdbd" stroke-width="1"/><line x1="626.5" y1="461.5" x2="759" y2="461.5" stroke="#bdbdbd" stroke-width="1"/><path d="M626.5 458.0 L630.0 461.5 L626.5 465.0 L623.0 461.5 Z" fill="#fff" stroke="#bdbdbd" stroke-width="1.3"/><path d="M690.5 458.0 L694.0 461.5 L690.5 465.0 L687.0 461.5 Z" fill="#fff" stroke="#bdbdbd" stroke-width="1.3"/><path d="M755 457.5 L759 461.5 L755 465.5" fill="none" stroke="#bdbdbd" stroke-width="1"/><path d="M722.5 473.5 Q722.5 479.5 728.5 479.5 Q722.5 479.5 722.5 485.5" fill="none" stroke="#bdbdbd" stroke-width="1"/><line x1="728.5" y1="479.5" x2="759" y2="479.5" stroke="#bdbdbd" stroke-width="1"/><path d="M759 475.5 L755 479.5 L759 483.5" fill="none" stroke="#bdbdbd" stroke-width="1"/><line x1="738.5" y1="497.5" x2="761" y2="497.5" stroke="#bdbdbd" stroke-width="1"/><path d="M738.5 494.0 L742.0 497.5 L738.5 501.0 L735.0 497.5 Z" fill="#fff" stroke="#bdbdbd" stroke-width="1.3"/><line x1="610.5" y1="533.5" x2="759" y2="533.5" stroke="#bdbdbd" stroke-width="1"/><path d="M610.5 530.0 L614.0 533.5 L610.5 537.0 L607.0 533.5 Z" fill="#fff" stroke="#bdbdbd" stroke-width="1.3"/><path d="M722.5 530.0 L726.0 533.5 L722.5 537.0 L719.0 533.5 Z" fill="#fff" stroke="#bdbdbd" stroke-width="1.3"/><path d="M755 529.5 L759 533.5 L755 537.5" fill="none" stroke="#bdbdbd" stroke-width="1"/><line x1="626.5" y1="551.5" x2="759" y2="551.5" stroke="#bdbdbd" stroke-width="1"/><path d="M626.5 548.0 L630.0 551.5 L626.5 555.0 L623.0 551.5 Z" fill="#fff" stroke="#bdbdbd" stroke-width="1.3"/><path d="M690.5 548.0 L694.0 551.5 L690.5 555.0 L687.0 551.5 Z" fill="#fff" stroke="#bdbdbd" stroke-width="1.3"/><path d="M755 547.5 L759 551.5 L755 555.5" fill="none" stroke="#bdbdbd" stroke-width="1"/><line x1="642.5" y1="569.5" x2="759" y2="569.5" stroke="#bdbdbd" stroke-width="1"/><path d="M642.5 566.0 L646.0 569.5 L642.5 573.0 L639.0 569.5 Z" fill="#fff" stroke="#bdbdbd" stroke-width="1.3"/><path d="M658.5 566.0 L662.0 569.5 L658.5 573.0 L655.0 569.5 Z" fill="#fff" stroke="#bdbdbd" stroke-width="1.3"/><path d="M755 565.5 L759 569.5 L755 573.5" fill="none" stroke="#bdbdbd" stroke-width="1"/><line x1="674.5" y1="587.5" x2="759" y2="587.5" stroke="#bdbdbd" stroke-width="1"/><path d="M674.5 584.0 L678.0 587.5 L674.5 591.0 L671.0 587.5 Z" fill="#fff" stroke="#bdbdbd" stroke-width="1.3"/><path d="M759 583.5 L755 587.5 L759 591.5" fill="none" stroke="#bdbdbd" stroke-width="1"/><line x1="610.5" y1="623.5" x2="759" y2="623.5" stroke="#bdbdbd" stroke-width="1"/><path d="M610.5 620.0 L614.0 623.5 L610.5 627.0 L607.0 623.5 Z" fill="#fff" stroke="#bdbdbd" stroke-width="1.3"/><path d="M722.5 620.0 L726.0 623.5 L722.5 627.0 L719.0 623.5 Z" fill="#fff" stroke="#bdbdbd" stroke-width="1.3"/><path d="M755 619.5 L759 623.5 L755 627.5" fill="none" stroke="#bdbdbd" stroke-width="1"/><line x1="626.5" y1="641.5" x2="759" y2="641.5" stroke="#bdbdbd" stroke-width="1"/><path d="M626.5 638.0 L630.0 641.5 L626.5 645.0 L623.0 641.5 Z" fill="#fff" stroke="#bdbdbd" stroke-width="1.3"/><path d="M690.5 638.0 L694.0 641.5 L690.5 645.0 L687.0 641.5 Z" fill="#fff" stroke="#bdbdbd" stroke-width="1.3"/><path d="M755 637.5 L759 641.5 L755 645.5" fill="none" stroke="#bdbdbd" stroke-width="1"/></svg></div>
<svg style="left:0;top:0" width="1848" height="978"><path d="M1628 280.5 H1646 L1650.5 285 V586.5" fill="none" stroke="#bdbdbd"/><path d="M1631.5 277 L1628 280.5 L1631.5 284" fill="none" stroke="#bdbdbd"/><line x1="1628" y1="586.5" x2="1647" y2="586.5" stroke="#bdbdbd"/><path d="M1650.5 583 L1654 586.5 L1650.5 590 L1647 586.5Z" fill="#fff" stroke="#bdbdbd" stroke-width="1.2"/><path d="M1628 583 L1631 586.5 L1628 590" fill="none" stroke="#bdbdbd"/></svg>
<div style="position:absolute;left:1814px;top:92px;width:21px;height:561px;background:#f0f0f0"></div>
<div style="position:absolute;left:1814px;top:113px;width:19px;height:298px;background:#cdcdcd"></div>
<svg style="left:1817px;top:97px" width="12" height="8" viewBox="0 0 12 8"><path d="M1 7 L6 2 L11 7" fill="none" stroke="#606060" stroke-width="1.6"/></svg>
<svg style="left:1817px;top:637px" width="12" height="8" viewBox="0 0 12 8"><path d="M1 1 L6 6 L11 1" fill="none" stroke="#606060" stroke-width="1.6"/></svg>
<div style="position:absolute;left:565px;top:653px;width:1270px;height:20px;background:#f0f0f0"></div>
<div style="position:absolute;left:586px;top:653px;width:1077px;height:19px;background:#cdcdcd"></div>
<svg style="left:569px;top:657px" width="8" height="12" viewBox="0 0 8 12"><path d="M7 1 L2 6 L7 11" fill="none" stroke="#606060" stroke-width="1.6"/></svg>
<svg style="left:1797px;top:657px" width="8" height="12" viewBox="0 0 8 12"><path d="M1 1 L6 6 L1 11" fill="none" stroke="#606060" stroke-width="1.6"/></svg>
<svg style="left:565px;top:681px" width="17" height="16" viewBox="0 0 17 16"><rect x="0" y="0" width="17" height="16" fill="#ddd"/><path d="M0 10 H3 V4 H6 V10 H8 M10 9 L12 7 L14 10 L16 8" fill="none" stroke="#c03030" stroke-width="1"/><rect x="8" y="0" width="2" height="16" fill="#1f4fa0"/></svg>
<svg style="left:587px;top:681px" width="17" height="16" viewBox="0 0 17 16"><path d="M1 12 H3 V3 H7 M10 3 V12 H14" fill="none" stroke="#c03030" stroke-width="1"/><path d="M1 8 L5 5 M11 8 L15 11" stroke="#c03030"/><rect x="7" y="0" width="2" height="16" fill="#1f4fa0"/></svg>
<div style="position:absolute;left:610px;top:689px;width:1px;height:1px;background:#888"></div>
<svg style="left:612px;top:682px" width="17" height="15" viewBox="0 0 17 15"><path d="M0.5 1.5 Q8.5 -1 16.5 1.5 L10.5 8 V14 H6.5 V8 Z" fill="#f59a1a"/><ellipse cx="8.5" cy="2" rx="6.5" ry="1.3" fill="#ffd9a0"/></svg>
<svg style="left:633px;top:682px" width="17" height="15" viewBox="0 0 17 15"><path d="M0.5 1.5 Q8.5 -1 16.5 1.5 L10.5 8 V14 H6.5 V8 Z" fill="#8c8c8c"/><path d="M8 7 L15 14 M15 7 L8 14" stroke="#8c8c8c" stroke-width="2"/></svg>
<div class="t" style="left:658px;top:681px;font-weight:bold;font-size:13.6px;">Current filter:</div>
<div style="position:absolute;left:800px;top:98px;width:407px;height:577px;background:#f2f2f2;border:1px solid #8a8a8a;border-top-color:#b8b8b8;border-left:2px solid #a0a0a0"></div>
<div style="position:absolute;left:833px;top:130px;width:370px;height:1px;background:#d4d4d4"></div>
<div style="position:absolute;left:833px;top:164px;width:370px;height:1px;background:#d4d4d4"></div>
<div style="position:absolute;left:833px;top:444px;width:370px;height:1px;background:#d4d4d4"></div>
<div style="position:absolute;left:833px;top:480px;width:370px;height:1px;background:#d4d4d4"></div>
<div style="position:absolute;left:833px;top:516px;width:370px;height:1px;background:#d4d4d4"></div>
<div style="position:absolute;left:833px;top:551px;width:370px;height:1px;background:#d4d4d4"></div>
<div style="position:absolute;left:833px;top:608px;width:370px;height:1px;background:#d4d4d4"></div>
<div style="position:absolute;left:833px;top:643px;width:370px;height:1px;background:#d4d4d4"></div>
<div style="position:absolute;left:802px;top:211px;width:405px;height:29px;border:1px solid #d64545;background:#f2f2f2"></div>
<div style="position:absolute;left:803px;top:215px;width:401px;height:22px;background:#91c9f7"></div>
<div style="position:absolute;left:803px;top:487px;width:24px;height:24px;background:#91c9f7"></div>
<div class="t" style="left:836px;top:103.81px;line-height:22px;font-size:14.4px;letter-spacing:0.2px;color:#000">Connections</div>
<svg style="left:1195px;top:108.5px" width="6" height="10" viewBox="0 0 6 10"><path d="M0.8 0.8 L4.8 5 L0.8 9.2" fill="none" stroke="#333" stroke-width="1.2"/></svg>
<div class="t" style="left:836px;top:138.41px;line-height:22px;font-size:14.4px;letter-spacing:0.2px;color:#000">Filter</div>
<svg style="left:1195px;top:143.1px" width="6" height="10" viewBox="0 0 6 10"><path d="M0.8 0.8 L4.8 5 L0.8 9.2" fill="none" stroke="#333" stroke-width="1.2"/></svg>
<div class="t" style="left:836px;top:172.31px;line-height:22px;font-size:14.4px;letter-spacing:0.2px;color:#000">Edit...</div>
<div class="t" style="left:1093px;top:172.31px;line-height:22px;font-size:14.4px;letter-spacing:0.3px;color:#000">Ctrl+E</div>
<div class="t" style="left:836px;top:194.21px;line-height:22px;font-size:14.4px;letter-spacing:0.2px;color:#000">Add...</div>
<div class="t" style="left:836px;top:216.41px;line-height:22px;font-size:14.4px;letter-spacing:0.2px;color:#000">Rename</div>
<div class="t" style="left:1093px;top:216.41px;line-height:22px;font-size:14.4px;letter-spacing:0.3px;color:#000">Ctrl+R</div>
<div class="t" style="left:836px;top:239.31px;line-height:22px;font-size:14.4px;letter-spacing:0.2px;color:#000">Duplicate</div>
<div class="t" style="left:1093px;top:239.31px;line-height:22px;font-size:14.4px;letter-spacing:0.3px;color:#000">Ctrl+D</div>
<div class="t" style="left:836px;top:262.21px;line-height:22px;font-size:14.4px;letter-spacing:0.2px;color:#000">Remove</div>
<div class="t" style="left:836px;top:284.41px;line-height:22px;font-size:14.4px;letter-spacing:0.2px;color:#000">Details</div>
<svg style="left:1195px;top:289.1px" width="6" height="10" viewBox="0 0 6 10"><path d="M0.8 0.8 L4.8 5 L0.8 9.2" fill="none" stroke="#333" stroke-width="1.2"/></svg>
<div class="t" style="left:836px;top:306.21px;line-height:22px;font-size:14.4px;letter-spacing:0.2px;color:#737b84">Move Up</div>
<div class="t" style="left:1093px;top:306.21px;line-height:22px;font-size:14.4px;letter-spacing:0.3px;color:#737b84">Ctrl+Mayús+U</div>
<div class="t" style="left:836px;top:328.11px;line-height:22px;font-size:14.4px;letter-spacing:0.2px;color:#737b84">Drill into subsystem</div>
<div class="t" style="left:1093px;top:328.11px;line-height:22px;font-size:14.4px;letter-spacing:0.3px;color:#737b84">Ctrl+Mayús+D</div>
<div class="t" style="left:836px;top:350.21px;line-height:22px;font-size:14.4px;letter-spacing:0.2px;color:#000">Add new subsystem to current system</div>
<div class="t" style="left:1093px;top:350.21px;line-height:22px;font-size:14.4px;letter-spacing:0.3px;color:#000">Ctrl+Mayús+N</div>
<div class="t" style="left:836px;top:372.31px;line-height:22px;font-size:14.4px;letter-spacing:0.2px;color:#000">Push down...</div>
<div class="t" style="left:836px;top:394.41px;line-height:22px;font-size:14.4px;letter-spacing:0.2px;color:#737b84">Pull up</div>
<div class="t" style="left:836px;top:416.61px;line-height:22px;font-size:14.4px;letter-spacing:0.2px;color:#737b84">Set Design Environment</div>
<svg style="left:1195px;top:421.3px" width="6" height="10" viewBox="0 0 6 10"><path d="M0.8 0.8 L4.8 5 L0.8 9.2" fill="none" stroke="#9a9a9a" stroke-width="1.2"/></svg>
<div class="t" style="left:836px;top:453.11px;line-height:22px;font-size:14.4px;letter-spacing:0.2px;color:#000">Show Arbitration Shares</div>
<div class="t" style="left:836px;top:489.51px;line-height:22px;font-size:14.4px;letter-spacing:0.2px;color:#000">Allow Connection Editing</div>
<div class="t" style="left:836px;top:525.31px;line-height:22px;font-size:14.4px;letter-spacing:0.2px;color:#737b84">Lock Base Address</div>
<div class="t" style="left:836px;top:560.01px;line-height:22px;font-size:14.4px;letter-spacing:0.2px;color:#737b84">Expand All</div>
<div class="t" style="left:836px;top:583.31px;line-height:22px;font-size:14.4px;letter-spacing:0.2px;color:#000">Collapse All</div>
<div class="t" style="left:836px;top:617.51px;line-height:22px;font-size:14.4px;letter-spacing:0.2px;color:#737b84">Set Color...</div>
<div class="t" style="left:836px;top:651.51px;line-height:22px;font-size:14.4px;letter-spacing:0.2px;color:#000">Print...</div>
<svg style="left:806px;top:142px" width="17" height="13" viewBox="0 0 17 13"><path d="M0.5 1 Q8.5 -0.5 16.5 1 L10.5 7 V12.5 H6.5 V7 Z" fill="#f7a11b"/><ellipse cx="8.5" cy="1.6" rx="6" ry="1" fill="#ffe0a8"/></svg>
<svg style="left:807px;top:175px" width="16" height="15" viewBox="0 0 16 15"><rect x="0.5" y="0.5" width="14" height="12" fill="#fff" stroke="#2060b0"/><rect x="0.5" y="0.5" width="14" height="2.5" fill="#2060b0"/><rect x="2" y="5" width="3" height="1.3" fill="#50a0e0"/><rect x="2" y="8.5" width="3" height="1.3" fill="#50a0e0"/><path d="M5.5 13.5 L12.5 6 L14.8 8.2 L7.8 15 L5 15Z" fill="#f2b23a"/><path d="M12.5 6 L13.8 4.6 L16 6.8 L14.8 8.2Z" fill="#e53935"/></svg>
<svg style="left:808px;top:198px" width="13" height="13" viewBox="0 0 13 13"><path d="M4.5 0 H8.5 V4.5 H13 V8.5 H8.5 V13 H4.5 V8.5 H0 V4.5 H4.5 Z" fill="#1ec24a"/></svg>
<svg style="left:806px;top:218px" width="17" height="16" viewBox="0 0 17 16"><path d="M2 11.5 L11.5 2 L14.5 5 L5 14.5 Z" fill="#f2b23a"/><path d="M11.5 2 L13 0.5 L16 3.5 L14.5 5Z" fill="#e53935"/><path d="M2 11.5 L5 14.5 L1 15.5Z" fill="#f6d9a0"/><circle cx="1.8" cy="14.3" r="1.6" fill="#111"/></svg>
<svg style="left:808px;top:266px" width="13" height="13" viewBox="0 0 13 13"><path d="M1 1 L12 12 M12 1 L1 12" stroke="#e0393e" stroke-width="1.3"/></svg>
<svg style="left:806px;top:286px" width="14" height="17" viewBox="0 0 14 17"><path d="M0.5 0.5 H9.5 L13.5 4.5 V16.5 H0.5 Z" fill="#fffbe9" stroke="#8c7a5c"/><path d="M9.5 0.5 V4.5 H13.5" fill="none" stroke="#8c7a5c"/><path d="M3 6.5 H11 M3 8.5 H11 M3 10.5 H11 M3 12.5 H11" stroke="#7a6a50" stroke-width="0.8"/></svg>
<svg style="left:808px;top:314px" width="11" height="7" viewBox="0 0 11 7"><path d="M0.5 6.5 L5.5 1 L10.5 6.5 Z" fill="#9c9c9c"/></svg>
<svg style="left:807px;top:331px" width="15" height="15" viewBox="0 0 15 15"><path d="M1 3 H5 V1 H9 V3 H13 V7 H15 V10 H13 V13 H8 V15 H5 V13 H1 Z" fill="#8e8e8e"/></svg>
<svg style="left:807px;top:353px" width="16" height="16" viewBox="0 0 16 16"><rect x="0.5" y="3.5" width="4" height="7" fill="#c8c8c8"/><rect x="2" y="12" width="9" height="2.5" fill="#c8c8c8"/><rect x="5" y="0.5" width="9" height="10" fill="#1e90e0"/><circle cx="12.5" cy="12.5" r="3.3" fill="#1ec24a"/><path d="M12.5 10.6 V14.4 M10.6 12.5 H14.4" stroke="#fff" stroke-width="1.3"/></svg>
<svg style="left:806px;top:374px" width="17" height="17" viewBox="0 0 17 17"><rect x="3" y="3" width="11" height="11" fill="#1f4aa0"/><path d="M0 0 L6 6 M17 0 L11 6 M0 17 L6 11 M17 17 L11 11" stroke="#22c04a" stroke-width="2.6"/><path d="M0 0 H5 L0 5Z M17 0 H12 L17 5Z M0 17 H5 L0 12Z M17 17 H12 L17 12Z" fill="#22c04a"/></svg>
<svg style="left:806px;top:396px" width="17" height="17" viewBox="0 0 17 17"><path d="M1 1 L5 5 M16 1 L12 5 M1 16 L5 12 M16 16 L12 12" stroke="#9c9c9c" stroke-width="2"/><path d="M0 0 H5 L0 5Z M17 0 H12 L17 5Z M0 17 H5 L0 12Z M17 17 H12 L17 12Z" fill="#9c9c9c"/></svg>
<svg style="left:808px;top:493px" width="14" height="12" viewBox="0 0 14 12"><path d="M1 6 L5 10 L13 1.5" fill="none" stroke="#1b2a3a" stroke-width="1.8"/></svg>
<svg style="left:807px;top:530px" width="8" height="9" viewBox="0 0 8 9"><rect x="0" y="3.5" width="7" height="5" fill="#8e8e8e"/><path d="M1.5 4 V2.5 A2 2 0 0 1 5.5 2.5 V4" fill="none" stroke="#8e8e8e" stroke-width="1.2"/></svg>
<svg style="left:807px;top:562px" width="15" height="15" viewBox="0 0 15 15"><rect x="0.5" y="0.5" width="9" height="9" fill="#d0d0d0" stroke="#999"/><rect x="2.5" y="2.5" width="9" height="9" fill="#d0d0d0" stroke="#999"/><rect x="5" y="5" width="9.5" height="9.5" fill="#e8e8e8" stroke="#999"/><path d="M7 9.8 H12.5 M9.8 7 V12.5" stroke="#999" stroke-width="1.2"/></svg>
<svg style="left:807px;top:585px" width="15" height="15" viewBox="0 0 15 15"><rect x="0.5" y="0.5" width="9" height="9" fill="#fff" stroke="#222"/><rect x="2.5" y="2.5" width="9" height="9" fill="#fff" stroke="#222"/><rect x="5" y="5" width="9.5" height="9.5" fill="#fff" stroke="#111" stroke-width="1.3"/><path d="M7 9.8 H12.5" stroke="#111" stroke-width="1.5"/></svg>
<svg style="left:806px;top:619px" width="16" height="15" viewBox="0 0 16 15"><path d="M8 0.5 C13 0.5 15.5 4 15.5 8 C15.5 12 12 14.5 8 14.5 C3.5 14.5 0.5 11.5 0.5 8 C0.5 5 2 3 4 2 L5 5 C6 6 8 6 8 4 C8 2.5 7 1.5 8 0.5Z" fill="#9a9a9a"/><circle cx="9.5" cy="3.5" r="1.8" fill="#f2f2f2"/></svg>
<svg style="left:806px;top:653px" width="17" height="17" viewBox="0 0 17 17"><rect x="4" y="0.5" width="8" height="5" fill="#fff" stroke="#7a6a50"/><rect x="0" y="4" width="17" height="8" rx="1" fill="#1a9be6"/><rect x="4" y="9.5" width="9" height="7" fill="#fffbe9" stroke="#7a6a50"/><path d="M6 12 H11 M6 14 H11" stroke="#7a6a50" stroke-width="0.8"/><circle cx="14" cy="6.5" r="0.9" fill="#fff"/></svg>
<div style="position:absolute;left:531px;top:709px;width:1309px;height:231px;border:1px solid #5f5f5f;border-top-right-radius:4px;"></div>
<div style="position:absolute;left:532px;top:735px;width:1307px;height:1px;background:#5f5f5f"></div>
<div style="position:absolute;left:531px;top:709px;width:121px;height:27px;background:linear-gradient(#7f8a95,#d5dade 80%,#e9ecef);border:1px solid #5f5f5f;border-bottom:none;border-top-left-radius:4px;border-top-right-radius:3px"></div>
<svg style="left:539px;top:714px" width="16" height="16" viewBox="0 0 16 16"><path d="M1.2 1 L7.2 7 M7.2 1 L1.2 7" stroke="#e05050" stroke-width="1"/><circle cx="4" cy="12" r="3.6" fill="#1e9be8"/><rect x="3.4" y="10.2" width="1.3" height="3.6" fill="#fff"/><path d="M9.5 3.2 H15 M9.5 6 H15 M9.5 11 H15 M9.5 14 H15" stroke="#2f5e9e" stroke-width="1.2"/></svg>
<div class="t" style="left:562px;top:714px;font-size:12.7px;">Messages</div>
<svg style="left:633px;top:715px" width="13" height="13" viewBox="0 0 13 13"><g transform="translate(6.5 6.5) rotate(45)"><path d="M-1.5 -4.9 A1.5 1.5 0 0 1 1.5 -4.9 V-1.5 H4.9 A1.5 1.5 0 0 1 4.9 1.5 H1.5 V4.9 A1.5 1.5 0 0 1 -1.5 4.9 V1.5 H-4.9 A1.5 1.5 0 0 1 -4.9 -1.5 H-1.5 Z" fill="none" stroke="#555" stroke-width="0.95"/></g></svg>
<div style="position:absolute;left:1785px;top:726px;width:8px;height:2px;background:#000"></div>
<svg style="left:1801px;top:717px" width="16" height="14" viewBox="0 0 16 14"><rect x="1.7" y="5.2" width="8.6" height="7.6" fill="#fff" stroke="#000" stroke-width="1.3"/><rect x="1" y="4.5" width="10" height="2.6" fill="#000"/><path d="M8.5 5 V3 Q8.5 2.3 9.3 2.3 H12" fill="none" stroke="#000" stroke-width="1.3"/><path d="M11 0 L14.5 2.3 L11 4.8 Z" fill="#000"/></svg>
<svg style="left:1823px;top:720px" width="13" height="10" viewBox="0 0 13 10"><rect x="0.7" y="0.7" width="10.6" height="7.8" fill="#fff" stroke="#000" stroke-width="1.3"/><rect x="0" y="0" width="12" height="2.6" fill="#000"/></svg>
<div style="position:absolute;left:534px;top:738px;width:1302px;height:199px;border:1px solid #8c8c8c;background:#fff"></div>
<div style="position:absolute;left:535px;top:739px;width:1281px;height:28px;background:#fff"></div>
<div style="position:absolute;left:609px;top:739px;width:1px;height:28px;background:#e3e3e3"></div>
<div style="position:absolute;left:799px;top:739px;width:1px;height:28px;background:#e3e3e3"></div>
<div style="position:absolute;left:535px;top:766px;width:1281px;height:1px;background:#f0f0f0"></div>
<div class="t" style="left:545px;top:745px;font-size:12.7px;">Type</div>
<div class="t" style="left:619px;top:745px;font-size:12.7px;">Path</div>
<div class="t" style="left:808px;top:745px;font-size:12.7px;">Message</div>
<div style="position:absolute;left:1816px;top:740px;width:19px;height:26px;background:#e3e3e3;border:1px solid #c7c7c7"></div>
<svg style="left:1818px;top:744px" width="16" height="16" viewBox="0 0 16 16"><rect x="3.5" y="1.5" width="12" height="13" fill="#e6e2f7" stroke="#9a94c8" stroke-width="0.8"/><path d="M3.5 6 H15.5 M3.5 10 H15.5 M8 1.5 V14.5 M12 1.5 V14.5" stroke="#a9a3d3" stroke-width="0.7"/><path d="M5 0.5 L6.2 3.3 L9.2 3.5 L6.9 5.4 L7.7 8.4 L5 6.8 L2.3 8.4 L3.1 5.4 L0.8 3.5 L3.8 3.3 Z" fill="#f2c230" stroke="#c89210" stroke-width="0.5"/><path d="M6 6 L14 14.5" stroke="#1c1c1c" stroke-width="2"/><path d="M6 6 L8 8" stroke="#fff" stroke-width="1.2"/></svg>
<div style="position:absolute;left:535px;top:789px;width:1281px;height:1px;background:#8a8a8a"></div>
<div style="position:absolute;left:535px;top:811px;width:1281px;height:1px;background:#8a8a8a"></div>
<div style="position:absolute;left:535px;top:833px;width:1281px;height:1px;background:#8a8a8a"></div>
<div style="position:absolute;left:535px;top:855px;width:1281px;height:1px;background:#8a8a8a"></div>
<div style="position:absolute;left:535px;top:877px;width:1281px;height:1px;background:#8a8a8a"></div>
<div style="position:absolute;left:535px;top:899px;width:1281px;height:1px;background:#8a8a8a"></div>
<div style="position:absolute;left:609px;top:767px;width:1px;height:149px;background:#8a8a8a"></div>
<div style="position:absolute;left:799px;top:767px;width:1px;height:149px;background:#8a8a8a"></div>
<svg style="left:535px;top:772px" width="11" height="11" viewBox="0 0 11 11"><rect x="0.5" y="0.5" width="10" height="10" fill="#f4f4f4" stroke="#9a9a9a"/><path d="M2.5 5.5 H8.5" stroke="#666" stroke-width="1.2"/></svg>
<svg style="left:548px;top:771px" width="15" height="15" viewBox="0 0 15 15"><path d="M4.5 0.5 H10.5 L14.5 4.5 V10.5 L10.5 14.5 H4.5 L0.5 10.5 V4.5 Z" fill="#e02727" stroke="#b81c1c" stroke-width="0.6"/><path d="M4.5 4.5 L10.5 10.5 M10.5 4.5 L4.5 10.5" stroke="#fff" stroke-width="2"/></svg>
<div class="t" style="left:612px;top:769px;font-size:12.7px;color:#d11a1a;">20 Errors</div>
<div style="position:absolute;left:535px;top:767px;width:1281px;height:149px;overflow:hidden">
<svg style="left:23px;top:26px" width="15" height="15" viewBox="0 0 15 15"><path d="M4.5 0.5 H10.5 L14.5 4.5 V10.5 L10.5 14.5 H4.5 L0.5 10.5 V4.5 Z" fill="#e02727" stroke="#b81c1c" stroke-width="0.6"/><path d="M4.5 4.5 L10.5 10.5 M10.5 4.5 L4.5 10.5" stroke="#fff" stroke-width="2"/></svg>
<div class="t" style="left:77px;top:24px;font-weight:bold;font-size:13.4px;color:#d10f0f">unsaved.nios2_gen2_0</div>
<div class="t" style="left:267px;top:24px;font-size:12.7px;color:#d10f0f">Reset slave is not specified. Please select the reset slave</div>
<svg style="left:23px;top:48px" width="15" height="15" viewBox="0 0 15 15"><path d="M4.5 0.5 H10.5 L14.5 4.5 V10.5 L10.5 14.5 H4.5 L0.5 10.5 V4.5 Z" fill="#e02727" stroke="#b81c1c" stroke-width="0.6"/><path d="M4.5 4.5 L10.5 10.5 M10.5 4.5 L4.5 10.5" stroke="#fff" stroke-width="2"/></svg>
<div class="t" style="left:77px;top:46px;font-weight:bold;font-size:13.4px;color:#d10f0f">unsaved.nios2_gen2_0</div>
<div class="t" style="left:267px;top:46px;font-size:12.7px;color:#d10f0f">Exception slave is not specified. Please select the exception slave</div>
<svg style="left:23px;top:70px" width="15" height="15" viewBox="0 0 15 15"><path d="M4.5 0.5 H10.5 L14.5 4.5 V10.5 L10.5 14.5 H4.5 L0.5 10.5 V4.5 Z" fill="#e02727" stroke="#b81c1c" stroke-width="0.6"/><path d="M4.5 4.5 L10.5 10.5 M10.5 4.5 L4.5 10.5" stroke="#fff" stroke-width="2"/></svg>
<div class="t" style="left:77px;top:68px;font-weight:bold;font-size:13.4px;color:#d10f0f">unsaved.nios2_gen2_0</div>
<div class="t" style="left:267px;top:68px;font-size:12.7px;color:#d10f0f"><b style="font-size:13.2px">nios2_gen2_0.clk</b> must be connected to a clock output</div>
<svg style="left:23px;top:92px" width="15" height="15" viewBox="0 0 15 15"><path d="M4.5 0.5 H10.5 L14.5 4.5 V10.5 L10.5 14.5 H4.5 L0.5 10.5 V4.5 Z" fill="#e02727" stroke="#b81c1c" stroke-width="0.6"/><path d="M4.5 4.5 L10.5 10.5 M10.5 4.5 L4.5 10.5" stroke="#fff" stroke-width="2"/></svg>
<div class="t" style="left:77px;top:90px;font-weight:bold;font-size:13.4px;color:#d10f0f">unsaved.onchip_memory2_0</div>
<div class="t" style="left:267px;top:90px;font-size:12.7px;color:#d10f0f"><b style="font-size:13.2px">onchip_memory2_0.clk1</b> must be connected to a clock output</div>
<svg style="left:23px;top:114px" width="15" height="15" viewBox="0 0 15 15"><path d="M4.5 0.5 H10.5 L14.5 4.5 V10.5 L10.5 14.5 H4.5 L0.5 10.5 V4.5 Z" fill="#e02727" stroke="#b81c1c" stroke-width="0.6"/><path d="M4.5 4.5 L10.5 10.5 M10.5 4.5 L4.5 10.5" stroke="#fff" stroke-width="2"/></svg>
<div class="t" style="left:77px;top:112px;font-weight:bold;font-size:13.4px;color:#d10f0f">unsaved.pll_0</div>
<div class="t" style="left:267px;top:112px;font-size:12.7px;color:#d10f0f"><b style="font-size:13.2px">pll_0.refclk</b> must be connected to a clock output</div>
<svg style="left:23px;top:136px" width="15" height="15" viewBox="0 0 15 15"><path d="M4.5 0.5 H10.5 L14.5 4.5 V10.5 L10.5 14.5 H4.5 L0.5 10.5 V4.5 Z" fill="#e02727" stroke="#b81c1c" stroke-width="0.6"/><path d="M4.5 4.5 L10.5 10.5 M10.5 4.5 L4.5 10.5" stroke="#fff" stroke-width="2"/></svg>
<div class="t" style="left:77px;top:134px;font-weight:bold;font-size:13.4px;color:#d10f0f">unsaved.jtag_uart_0</div>
<div class="t" style="left:267px;top:134px;font-size:12.7px;color:#d10f0f"><b style="font-size:13.2px">jtag_uart_0.clk</b> must be connected to a clock output</div>
</div>
<div style="position:absolute;left:1816px;top:767px;width:19px;height:149px;background:#f0f0f0"></div>
<div style="position:absolute;left:1816px;top:789px;width:19px;height:15px;background:#cdcdcd"></div>
<svg style="left:1820px;top:773px" width="11" height="7" viewBox="0 0 11 7"><path d="M1 6 L5.5 1.5 L10 6" fill="none" stroke="#606060" stroke-width="1.5"/></svg>
<svg style="left:1820px;top:900px" width="11" height="7" viewBox="0 0 11 7"><path d="M1 1 L5.5 5.5 L10 1" fill="none" stroke="#606060" stroke-width="1.5"/></svg>
<div style="position:absolute;left:535px;top:916px;width:1300px;height:20px;background:#f0f0f0"></div>
<div style="position:absolute;left:556px;top:917px;width:1119px;height:18px;background:#cdcdcd"></div>
<svg style="left:541px;top:921px" width="7" height="11" viewBox="0 0 7 11"><path d="M6 1 L1.5 5.5 L6 10" fill="none" stroke="#606060" stroke-width="1.5"/></svg>
<svg style="left:1801px;top:921px" width="7" height="11" viewBox="0 0 7 11"><path d="M1 1 L5.5 5.5 L1 10" fill="none" stroke="#606060" stroke-width="1.5"/></svg>
<div style="position:absolute;left:0px;top:945px;width:1669px;height:25px;background:#f4b2b4;border-top:1px solid #d8b6b8;border-bottom:1px solid #dcbcbe"></div>
<div class="t" style="left:2px;top:948px;font-size:12.7px;color:#111;">18 Warnings</div>
<div style="position:absolute;left:1675px;top:946px;width:107px;height:23px;background:#e1e1e1;border:1px solid #adadad"></div>
<div class="t" style="left:1683px;top:948px;font-size:12.4px;">Generate HDL...</div>
<div style="position:absolute;left:1789px;top:946px;width:49px;height:23px;background:#e1e1e1;border:1px solid #adadad"></div>
<div class="t" style="left:1797px;top:948px;font-size:12.7px;">Finish</div>
<div style="position:absolute;left:0px;top:970px;width:1848px;height:6px;background:#f0f0f0"></div>
<div style="position:absolute;left:0px;top:976px;width:415px;height:1px;background:#b4b4b4"></div>
<div style="position:absolute;left:0px;top:977px;width:415px;height:1px;background:#fafafa"></div>
<div style="position:absolute;left:415px;top:976px;width:1433px;height:2px;background:#0f1214"></div>
</body></html>
